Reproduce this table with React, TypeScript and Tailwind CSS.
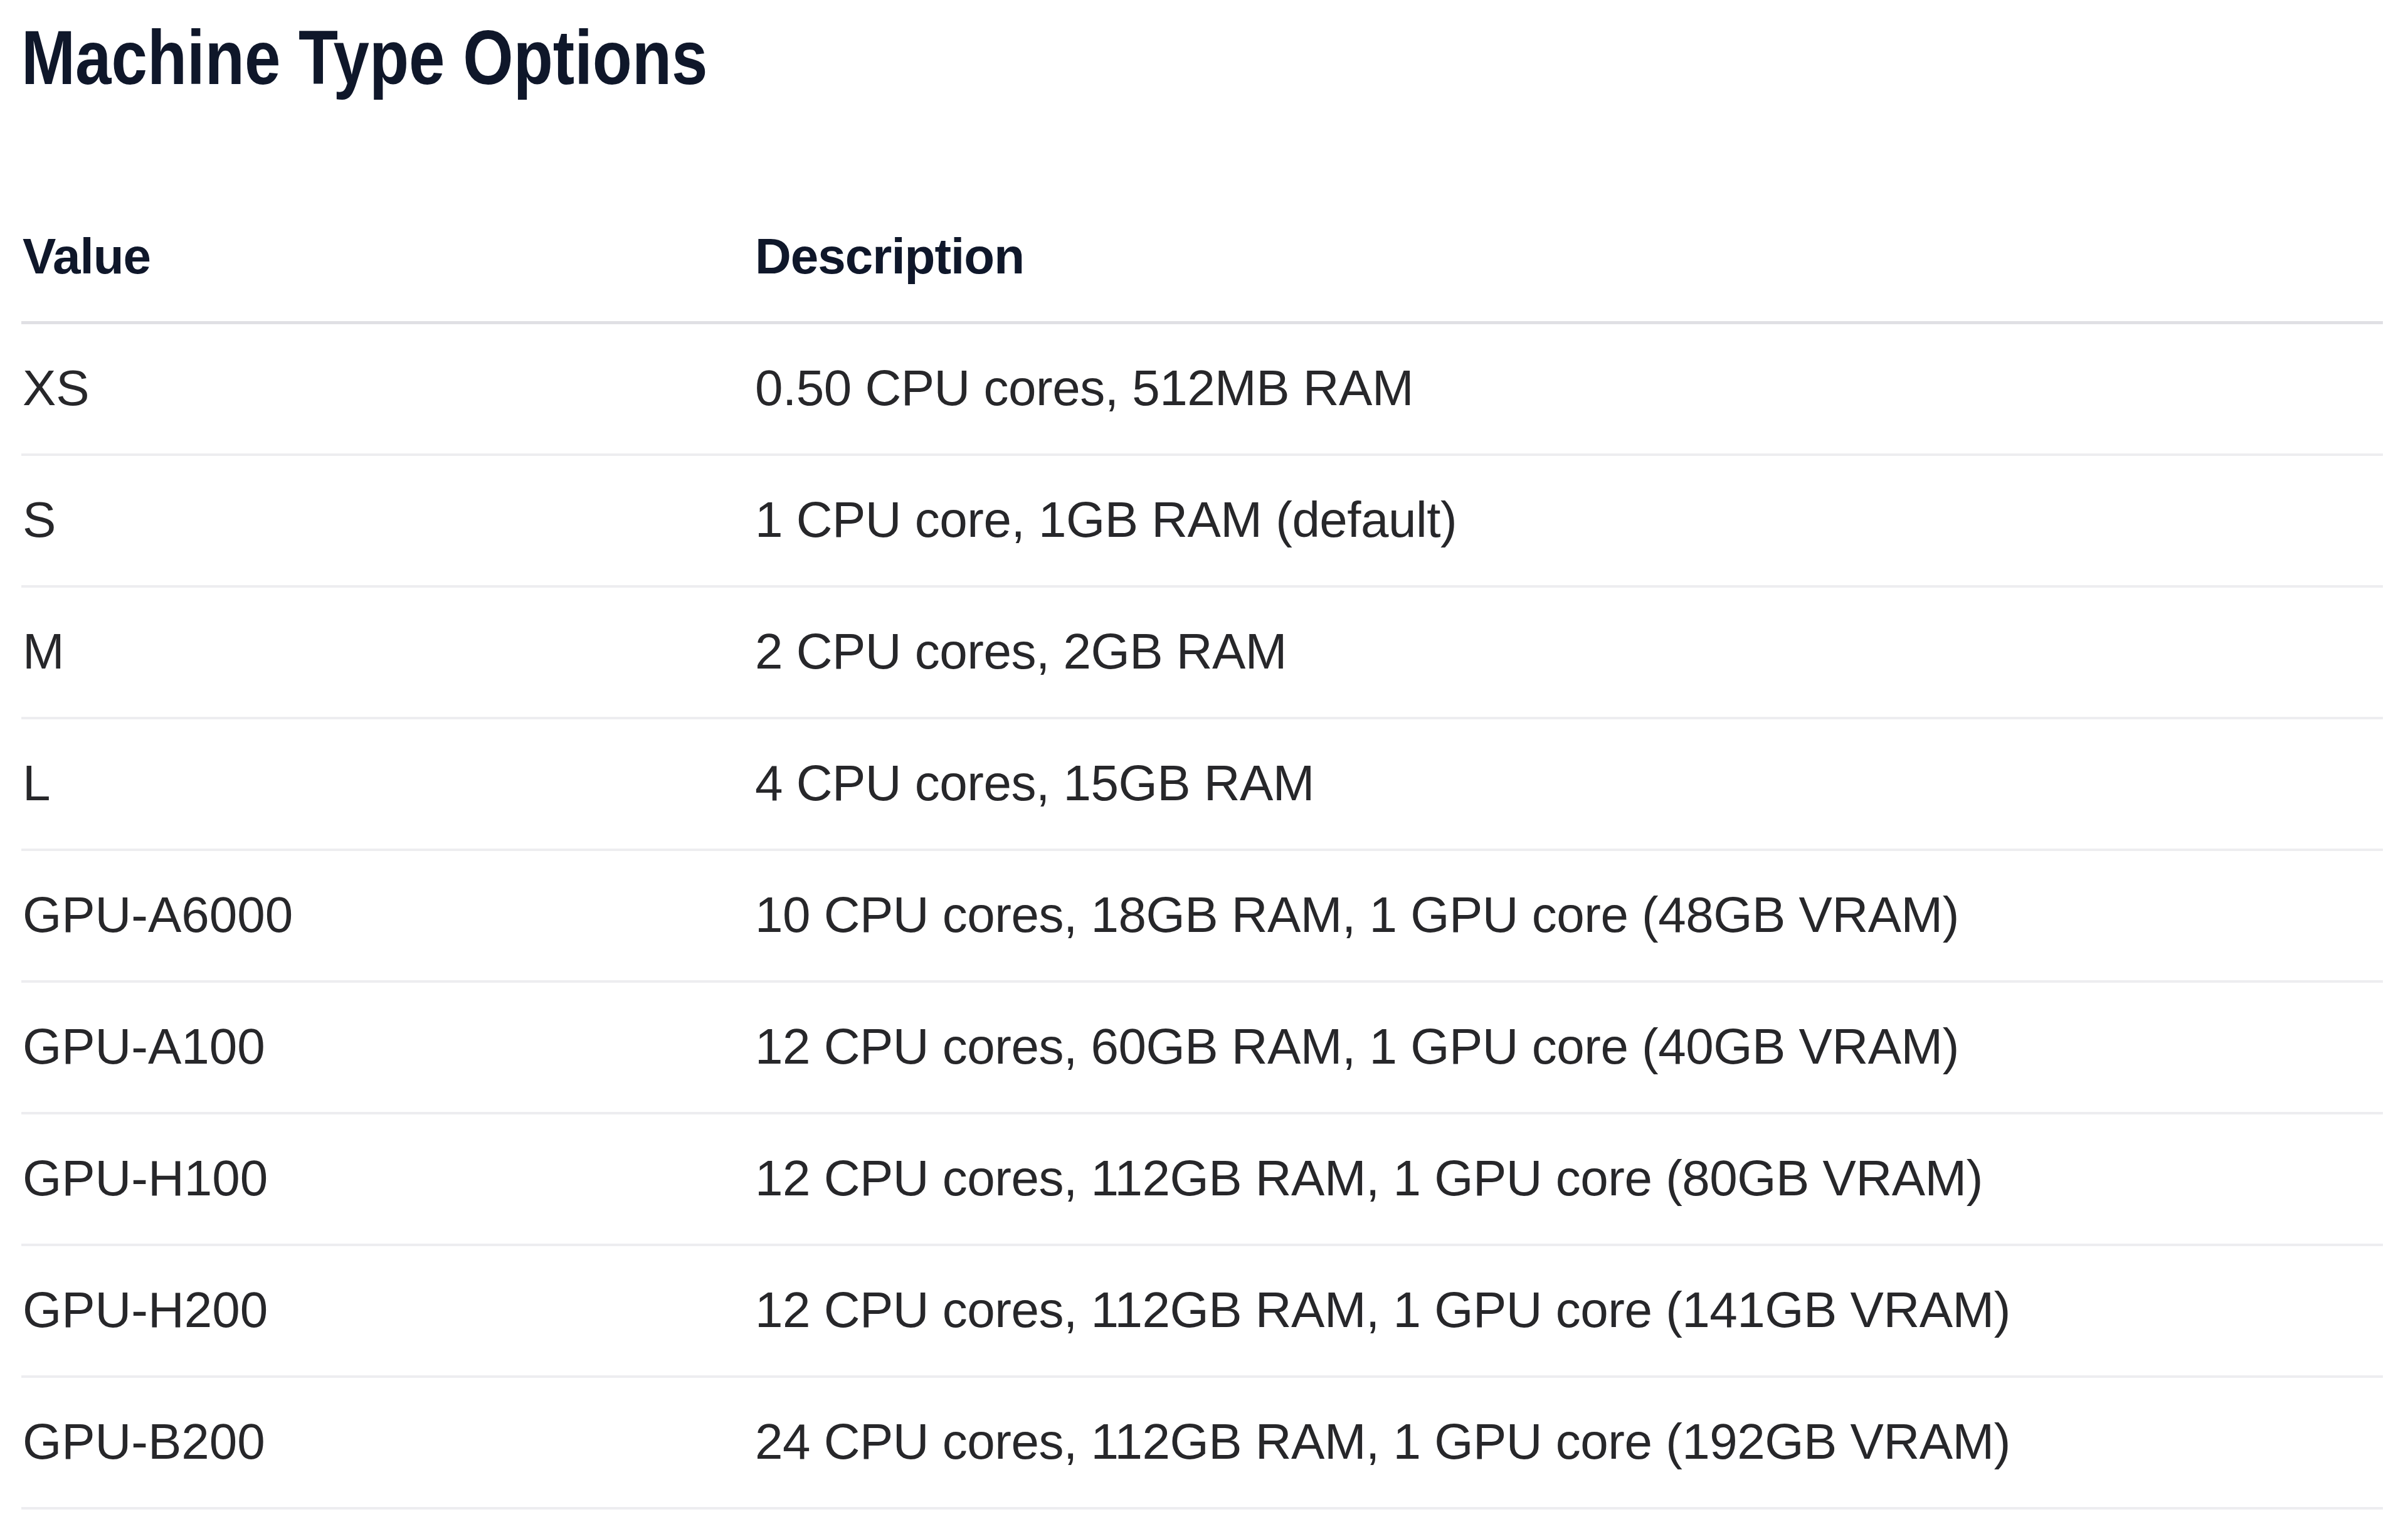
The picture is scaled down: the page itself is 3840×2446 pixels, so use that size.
import React from 'react';

interface MachineType {
  value: string;
  description: string;
}

const machineTypes: MachineType[] = [
  { value: 'XS', description: '0.50 CPU cores, 512MB RAM' },
  { value: 'S', description: '1 CPU core, 1GB RAM (default)' },
  { value: 'M', description: '2 CPU cores, 2GB RAM' },
  { value: 'L', description: '4 CPU cores, 15GB RAM' },
  { value: 'GPU-A6000', description: '10 CPU cores, 18GB RAM, 1 GPU core (48GB VRAM)' },
  { value: 'GPU-A100', description: '12 CPU cores, 60GB RAM, 1 GPU core (40GB VRAM)' },
  { value: 'GPU-H100', description: '12 CPU cores, 112GB RAM, 1 GPU core (80GB VRAM)' },
  { value: 'GPU-H200', description: '12 CPU cores, 112GB RAM, 1 GPU core (141GB VRAM)' },
  { value: 'GPU-B200', description: '24 CPU cores, 112GB RAM, 1 GPU core (192GB VRAM)' },
];

export default function App() {
  return (
    <div className="min-h-screen bg-white pl-[34px] pr-[40px] pt-[17px] font-['Liberation_Sans',Arial,sans-serif]">
      <h1 className="origin-left scale-x-[0.84] whitespace-nowrap text-[123px] leading-[150px] font-bold text-[#0f172a]">
        Machine Type Options
      </h1>

      {/* Options table */}
      <table className="mt-[139px] w-full table-fixed border-collapse text-left">
        <thead>
          <tr className="border-b-[5px] border-[#e0e0e4]">
            <th className="w-[1170px] py-[43px] pl-[2px] text-[80px] leading-[120px] font-bold tracking-[-1px] text-[#0f172a]">
              Value
            </th>
            <th className="py-[43px] text-[80px] leading-[120px] font-bold tracking-[-1px] text-[#0f172a]">
              Description
            </th>
          </tr>
        </thead>
        <tbody>
          {machineTypes.map((m) => (
            <tr key={m.value} className="border-b-[4px] border-[#ededf0]">
              <td className="pt-[42px] pb-[44px] pl-[2px] text-[80px] leading-[120px] text-[#27272a]">{m.value}</td>
              <td className="pt-[42px] pb-[44px] text-[80px] leading-[120px] tracking-[-0.5px] text-[#27272a]">
                {m.description}
              </td>
            </tr>
          ))}
        </tbody>
      </table>
    </div>
  );
}
